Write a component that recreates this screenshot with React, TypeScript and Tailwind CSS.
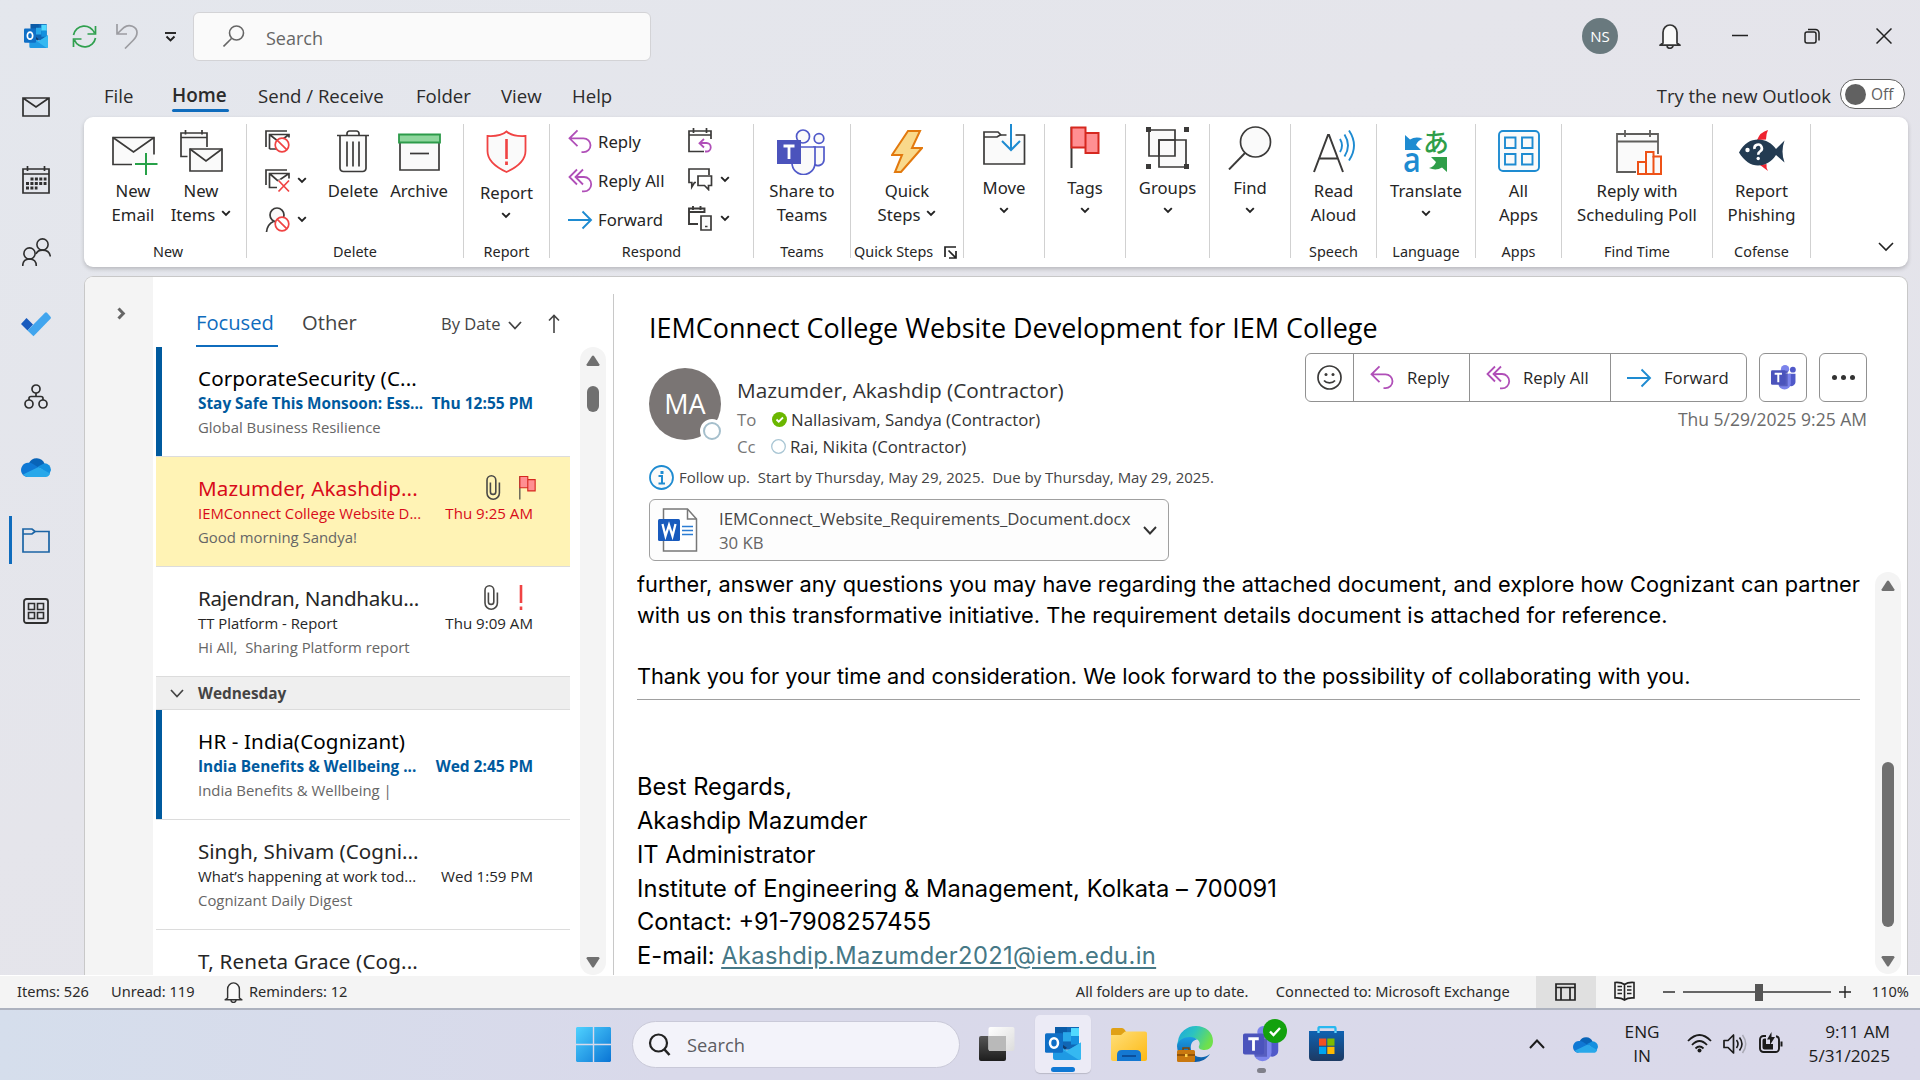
import React from 'react';

type Kids = { children?: React.ReactNode };

function Ico({ w, h, className = '', children }: { w: number; h: number; className?: string } & Kids) {
  return (
    <svg width={w} height={h} viewBox={`0 0 ${w} ${h}`} fill="none" className={'block shrink-0 ' + className}>
      {children}
    </svg>
  );
}

const INK = '#3b3a39';
const RED = '#f04343';
const BLUE = '#1e8bd1';
const PURPLE = '#b04fb8';
const FILL = '#fafafa';

/* ---------- shared icons ---------- */

function Caret({ className = '' }: { className?: string }) {
  return (
    <Ico w={10} h={7} className={className}>
      <path d="M1.2 1.2 5 5l3.8-3.8" stroke="#222" strokeWidth="1.9" />
    </Ico>
  );
}

function OutlookLogo({ w, h }: { w: number; h: number }) {
  return (
    <svg width={w} height={h} viewBox="0 3 36 32" preserveAspectRatio="none" className="block shrink-0">
      <path d="M10 3h24v22H10z" fill="#1066b5" />
      <path d="M10 3h12v6H10z" fill="#0a5ba8" />
      <path d="M18 8h8v9h-8z" fill="#28a8ea" />
      <path d="M26 4h8v8h-8z" fill="#50d9ff" />
      <path d="M26 12h8v8h-8z" fill="#1490df" />
      <path d="M10 15l12 8-12 10z" fill="#123b6d" />
      <path d="M36 18v15a2 2 0 0 1-2 2H10a2 2 0 0 1-2-2V17l14 9z" fill="#1f9ae4" />
      <path d="M36 18v15a2 2 0 0 1-2 2L16 24l6 2z" fill="#35b8f1" />
      <rect x="0" y="9" width="18" height="19" rx="1.600" fill="#0f6fc6" />
      <ellipse cx="9" cy="18.500" rx="4" ry="4.600" fill="none" stroke="#fff" strokeWidth="2.500" />
    </svg>
  );
}

function ReplyIcon() {
  return (
    <Ico w={25} h={25}>
      <path d="M9.500 1.500 1.500 9.500l8 8M2 9.500h13.500a7 7 0 0 1 0 14h-2" transform="scale(1 .98)" stroke={PURPLE} strokeWidth="1.800" />
    </Ico>
  );
}

function ReplyAllIcon() {
  return (
    <Ico w={25} h={25}>
      <path d="M9 1.500 1.500 9 9 16.500M15 1.500 7.500 9l7.500 7.500M8 9h8a7.200 7.200 0 0 1 0 14.400h-2" stroke={PURPLE} strokeWidth="1.800" />
    </Ico>
  );
}

function ForwardIcon() {
  return (
    <Ico w={25} h={20}>
      <path d="M0 10h23M14.500 1.500 23 10l-8.500 8.500" stroke={BLUE} strokeWidth="1.900" />
    </Ico>
  );
}

function FlagIcon({ w, h }: { w: number; h: number }) {
  return (
    <svg width={w} height={h} viewBox="0 0 30 42" fill="none" className="block shrink-0">
      <path d="M1.500 1v41" stroke={INK} strokeWidth="2" />
      <path d="M1.500 1.500h14v20h-14zM15.500 7h13v20h-13z" fill="#ff8f92" stroke="#d6281f" strokeWidth="2" />
    </svg>
  );
}

function OneDrive({ w, h }: { w: number; h: number }) {
  return (
    <svg width={w} height={h} viewBox="0 0 30 20" className="block shrink-0">
      <path d="M8 6a8.500 8.500 0 0 1 15.500.5L17 13 7 8z" fill="#0864b8" />
      <path d="M7 5.800A7 7 0 0 1 12 7l8 5-14 8a7 7 0 0 1-5-10.500A7 7 0 0 1 7 5.800z" fill="#0f78d4" />
      <path d="M17 9.500l6.500-3.300A6.800 6.800 0 0 1 30 13l-2 5z" fill="#1490df" />
      <path d="M17.500 10l11.500 6.500a5 5 0 0 1-5 3.500H7a7 7 0 0 1-5-2.500z" fill="#28a8ea" />
    </svg>
  );
}

function Paperclip() {
  return (
    <Ico w={15} h={25}>
      <path d="M4.400 7.500v9.200a2.700 2.700 0 0 0 5.400 0V5.200a4.400 4.400 0 0 0-8.800 0V18a6.200 6.200 0 0 0 12.400 0V7.500" stroke="#4a4947" strokeWidth="1.600" />
    </Ico>
  );
}

function Bell({ w, h }: { w: number; h: number }) {
  return (
    <svg width={w} height={h} viewBox="0 0 22 25" fill="none" className="block shrink-0">
      <path d="M4 19V8.500a7 7.500 0 0 1 14 0V19l3 2.200H1z" fill={FILL} stroke="#333" strokeWidth="1.700" strokeLinejoin="round" />
      <path d="M8 21.500a3 2.800 0 0 0 6 0" stroke="#333" strokeWidth="1.700" />
    </svg>
  );
}

function NoSign({ x, y }: { x: number; y: number }) {
  return (
    <g transform={`translate(${x} ${y})`}>
      <circle r="6.800" fill="#fff" stroke={RED} strokeWidth="1.700" />
      <path d="M-4.700-4.700 4.700 4.700" stroke={RED} strokeWidth="1.700" />
    </g>
  );
}

/* ---------- ribbon icons ---------- */

function NewEmailIcon() {
  return (
    <Ico w={46} h={46}>
      <path d="M1 7.500h41v27H1z" fill={FILL} />
      <path d="M20 34.500H1v-27h41v17" stroke={INK} strokeWidth="1.700" />
      <path d="M1 7.500 21.500 22 42 7.500" stroke={INK} strokeWidth="1.700" />
      <path d="M34 23v22M23 34h22.500" stroke="#27a148" strokeWidth="2" />
    </Ico>
  );
}

function NewItemsIcon() {
  return (
    <Ico w={43} h={42}>
      <path d="M1 3h26v15H10v9H1z" fill={FILL} />
      <path d="M7.500 26.500H1V3h26v14M1 7.500h26M5.500 0v4.500M22 0v4.500" stroke={INK} strokeWidth="1.700" />
      <path d="M10 19h32v22H10z" fill={FILL} stroke={INK} strokeWidth="1.700" />
      <path d="M10 19l16 12 16-12" stroke={INK} strokeWidth="1.700" />
    </Ico>
  );
}

function IgnoreIcon() {
  return (
    <Ico w={25} h={24}>
      <path d="M1 17V1h21M4.500 19V4.500H24v3M12 19H4.500M4.500 4.500 14 12l10-7.500" stroke={INK} strokeWidth="1.700" />
      <NoSign x={17} y={15} />
    </Ico>
  );
}

function CleanupIcon() {
  return (
    <Ico w={25} h={24}>
      <path d="M1 16V1h21M12 18.500H4.500V4.500H24v5M4.500 4.500 13 12l11-7.500" stroke={INK} strokeWidth="1.700" />
      <path d="M13.500 11.500l10.500 11M24 11.500l-10.500 11" stroke="#fff" strokeWidth="4" />
      <path d="M13.500 11.500l10.500 11M24 11.500l-10.500 11" stroke={RED} strokeWidth="1.700" />
    </Ico>
  );
}

function JunkIcon() {
  return (
    <Ico w={25} h={25}>
      <circle cx="12" cy="8" r="7" fill={FILL} stroke={INK} strokeWidth="1.700" />
      <path d="M8.500 14.500C4 16.500 2 20 1.500 25" stroke={INK} strokeWidth="1.700" />
      <NoSign x={17} y={17} />
    </Ico>
  );
}

function TrashIcon() {
  return (
    <Ico w={32} h={43}>
      <path d="M3 6v32.500a3.500 3.500 0 0 0 3.500 3h19a3.500 3.500 0 0 0 3.500-3V6" fill={FILL} stroke={INK} strokeWidth="1.700" />
      <path d="M0 5.500h32M10 5V3.500A2.500 2.500 0 0 1 12.500 1h7A2.500 2.500 0 0 1 22 3.500V5M10 11.500v25M16 11.500v25M22 11.500v25" stroke={INK} strokeWidth="1.700" />
    </Ico>
  );
}

function ArchiveIcon() {
  return (
    <Ico w={43} h={38}>
      <path d="M2 9h39v28H2z" fill={FILL} stroke={INK} strokeWidth="1.700" />
      <path d="M1 1.500h41V9.500H1z" fill="#8fd69d" stroke="#2d9b4a" strokeWidth="1.800" />
      <path d="M12 20.500h19" stroke={INK} strokeWidth="1.700" />
    </Ico>
  );
}

function ShieldIcon() {
  return (
    <Ico w={41} h={43}>
      <path d="M20.500 1.500c4 3.500 11 5 19 4.500v15c0 10-8 16-19 21-11-5-19-11-19-21V6c8 .5 15-1 19-4.500z" fill={FILL} stroke={RED} strokeWidth="1.800" />
      <path d="M20.500 9v20" stroke={RED} strokeWidth="2.600" />
      <path d="M20.500 31.500v3.500" stroke={RED} strokeWidth="2.800" />
    </Ico>
  );
}

function MeetingReplyIcon() {
  return (
    <Ico w={25} h={25}>
      <path d="M16 23.500H1V3h22v8M1 7h22M5.500 0v5M18.500 0v5" stroke={INK} strokeWidth="1.700" />
      <path d="M16 11l-4.500 4.200L16 19.500M11.500 15h7a4 4 0 0 1 0 8.500H17" stroke={PURPLE} strokeWidth="1.800" />
    </Ico>
  );
}

function ChatIcon() {
  return (
    <Ico w={25} h={23}>
      <path d="M8 14.500H6.500L3.800 19v-4.500H1V1h20v6" stroke={INK} strokeWidth="1.700" />
      <path d="M10 8h13.500v9.500h-3v4l-4-4H10z" fill="#fff" stroke={INK} strokeWidth="1.700" />
    </Ico>
  );
}

function MoreRespondIcon() {
  return (
    <Ico w={25} h={25}>
      <path d="M10 18H1V2.500h15.500V7M1 6h15.500M5 0v4M12.500 0v4" stroke={INK} strokeWidth="1.900" />
      <path d="M13 10h10v14H13zM17 20.500h2.500" fill={FILL} stroke={INK} strokeWidth="1.700" />
    </Ico>
  );
}

function TeamsOutline() {
  const c = '#5059c9';
  return (
    <Ico w={50} h={46}>
      <path d="M37 18h10v13a6 6 0 0 1-10 4z" fill={FILL} stroke={c} strokeWidth="1.700" />
      <path d="M15 18h23v16a11.500 11.500 0 0 1-23 0z" fill={FILL} stroke={c} strokeWidth="1.700" />
      <circle cx="26" cy="7.500" r="6.500" fill={FILL} stroke={c} strokeWidth="1.700" />
      <circle cx="42" cy="9.500" r="4.800" fill={FILL} stroke={c} strokeWidth="1.700" />
      <path d="M0 11h24v24H0z" fill="#4b53bc" />
      <path d="M6.500 17h11M12 17v13" stroke="#fff" strokeWidth="2.800" />
    </Ico>
  );
}

function BoltIcon() {
  return (
    <Ico w={32} h={43}>
      <path d="M17 1h12L21 18h10L10 42H4l7-17H1z" fill="#f9d98b" stroke="#e2790e" strokeWidth="2" />
    </Ico>
  );
}

function MoveIcon() {
  return (
    <Ico w={43} h={42}>
      <path d="M1 40V8h14l3 3h23.500v29z" fill={FILL} stroke={INK} strokeWidth="1.700" />
      <path d="M1 13h13l4-2.500" stroke={INK} strokeWidth="1.700" />
      <path d="M28 8v6" stroke="#fff" strokeWidth="9" />
      <path d="M28 0v25M19 17l9 9 9-9" stroke={BLUE} strokeWidth="2" />
    </Ico>
  );
}

function GroupsIcon() {
  return (
    <Ico w={43} h={42}>
      <path d="M3 3h26v26H3z" fill={FILL} stroke={INK} strokeWidth="1.700" />
      <path d="M13 13h27v27H13z" fill={FILL} stroke={INK} strokeWidth="1.700" />
      <path d="M13 13h16v16H13z" stroke={INK} strokeWidth="1.700" />
      <path d="M0 0h5v5H0zM38 0h5v5h-5zM0 37h5v5H0zM38 37h5v5h-5z" fill={INK} />
    </Ico>
  );
}

function FindIcon() {
  return (
    <Ico w={44} h={44}>
      <circle cx="27.500" cy="16" r="15" fill={FILL} stroke={INK} strokeWidth="1.700" />
      <path d="M17 27 1 43.500" stroke={INK} strokeWidth="1.900" />
    </Ico>
  );
}

function ReadAloudIcon() {
  return (
    <Ico w={42} h={43}>
      <path d="M1 42 15 5h1l14 37M6 28.500h19" stroke={INK} strokeWidth="2" />
      <path d="M27 9q4 6.500 0 13M31.500 4.500q7 11 0 22M36 .5q10 15 0 30" stroke={BLUE} strokeWidth="1.900" />
    </Ico>
  );
}

function TranslateIcon() {
  return (
    <div className="relative h-[43px] w-[42px]">
      <svg width="42" height="43" viewBox="0 0 42 43" className="absolute inset-0">
        <path d="M0 5l5 4.500Q11 6 18 9q-5 1-7 6l5 5H0z" fill={BLUE} />
        <path d="M42 42l-5-4.500Q31 41 24 38q5-1 7-6l-5-5h16z" fill="#2f9e49" />
      </svg>
      <span className="absolute -left-[2px] top-[12px] origin-left scale-x-90 font-['Open_Sans'] text-[34px] font-semibold leading-[34px] text-[#1e8bd1]">a</span>
      <span className="absolute left-[18px] -top-[2px] font-['Noto_Sans_CJK_JP'] text-[26px] font-medium leading-[26px] text-[#2f9e49]">あ</span>
    </div>
  );
}

function AllAppsIcon() {
  return (
    <Ico w={42} h={42}>
      <rect x="1" y="1" width="40" height="40" rx="4" fill={FILL} stroke={BLUE} strokeWidth="1.900" />
      <path d="M7 7.500h10.500v10.500H7zM24 7.500h10.500v10.500H24zM7 24h10.500v10.500H7zM24 24h10.500v10.500H24z" stroke={BLUE} strokeWidth="1.900" />
    </Ico>
  );
}

function PollIcon() {
  return (
    <Ico w={46} h={45}>
      <path d="M1 4h41v17H28v21H1z" fill={FILL} />
      <path d="M20 42H1V4h41v20M1 11.500h41M9 0v7M34 0v7" stroke="#5f5e5c" strokeWidth="1.800" />
      <path d="M22 32h8V22h7.500v4.500H45v17.500H22z" fill={FILL} stroke="#ee5217" strokeWidth="2" />
      <path d="M30 32v12M37.500 26v18" stroke="#ee5217" strokeWidth="2" />
    </Ico>
  );
}

function FishIcon() {
  return (
    <Ico w={46} h={42}>
      <path d="M18 10Q21 2 29 0q-2 4-2 9.500z" fill="#ef2330" />
      <path d="M21 35l8 6q-2-3-1.500-7z" fill="#ef2330" />
      <path d="M0 22.500C5 13 12 9.500 19 9.500c8 0 14 4 18 9.500l8.500-8.500q-4 11 0 22L37 25c-4 6-10 10.500-18 10.500C12 35.500 5 31 0 22.500z" fill="#233b52" />
      <circle cx="8.500" cy="20" r="2.200" fill="#fff" />
      <path d="M15.500 19a3.700 3.700 0 1 1 5.500 2.500c-1.500 1-1.800 1.600-1.800 3.200" stroke="#fff" strokeWidth="2.600" />
      <circle cx="19.200" cy="28.500" r="1.700" fill="#fff" />
    </Ico>
  );
}

/* ---------- title bar and tabs ---------- */

function TitleBar() {
  return (
    <header className="flex h-[72px] items-center">
      <div className="flex w-[193px] items-center">
        <div className="ml-6"><OutlookLogo w={24} h={24} /></div>
        <Ico w={25} h={25} className="ml-6">
          <path d="M1.500 11A11 11 0 0 1 22.500 9M23.500 2v8h-8M23.500 14A11 11 0 0 1 2.500 16M1.500 23v-8h8" stroke="#2fa04e" strokeWidth="1.700" />
        </Ico>
        <Ico w={23} h={25} className="ml-[19px]">
          <path d="M1 0v10h10M1.500 9.500 8 3.500c5-4 13-1 13 5 0 3-1 5-4 8l-8 8" stroke="#9c9ca1" strokeWidth="1.700" />
        </Ico>
        <Ico w={11} h={10} className="ml-[26px] mt-px">
          <path d="M0 1h11" stroke="#222" strokeWidth="1.900" />
          <path d="M1.500 4.500l4 4 4-4" stroke="#222" strokeWidth="1.900" />
        </Ico>
      </div>
      <div className="flex h-[49px] w-[458px] items-center rounded-md border border-[#d3d3d6] bg-[#fafafa] pl-[29px]">
        <Ico w={22} h={22}>
          <circle cx="13.500" cy="8" r="7" stroke="#666" strokeWidth="1.600" />
          <path d="M8.500 13.500.5 21.500" stroke="#666" strokeWidth="1.600" />
        </Ico>
        <span className="ml-[21px] mt-[5px] text-[18px] text-[#666]">Search</span>
      </div>
      <div className="ml-auto flex items-center">
        <div className="flex size-9 items-center justify-center rounded-full bg-[#69797e] text-[15px] text-white">NS</div>
        <div className="ml-[41px]"><Bell w={22} h={25} /></div>
        <Ico w={16} h={16} className="ml-[51px]"><path d="M0 7.500h16" stroke="#222" strokeWidth="1.500" /></Ico>
        <Ico w={16} h={16} className="ml-14">
          <rect x="1" y="4" width="11" height="11" rx="2" stroke="#222" strokeWidth="1.500" />
          <path d="M4 1.500h7.500a3.500 3.500 0 0 1 3.500 3.500v7.500" stroke="#222" strokeWidth="1.500" />
        </Ico>
        <Ico w={16} h={16} className="ml-14 mr-7"><path d="M.5.5l15 15M15.500.5l-15 15" stroke="#222" strokeWidth="1.500" /></Ico>
      </div>
    </header>
  );
}

function Tabs() {
  return (
    <nav className="flex h-[45px] pl-[104px] text-[18.600px] leading-[47px] text-[#2b2b2b]">
      <span className="w-[68px]">File</span>
      <span className="flex w-[86px] flex-col">
        <span className="h-[37px] text-[18.900px] font-semibold">Home</span>
        <span className="h-[3px] w-[57px] rounded-sm bg-[#0f6cbd]" />
      </span>
      <span className="w-[158px]">Send / Receive</span>
      <span className="w-[85px]">Folder</span>
      <span className="w-[71px]">View</span>
      <span>Help</span>
      <span className="ml-auto text-[18.450px]">Try the new Outlook</span>
      <span className="ml-[9px] mr-[15px] mt-[7px] flex h-[30px] w-[65px] items-center rounded-full border-[1.500px] border-[#616161] bg-white pl-1">
        <span className="size-[21px] rounded-full bg-[#616161]" />
        <span className="ml-[5px] mt-px text-[15.500px] leading-none text-[#616161]">Off</span>
      </span>
    </nav>
  );
}

/* ---------- ribbon ---------- */

function Big({ icon, lines, caret, w, top = 13, text = 66 }: { icon: React.ReactNode; lines: string[]; caret?: 'inline' | 'below'; w: string; top?: number; text?: number }) {
  return (
    <div className={'flex flex-col items-center ' + w}>
      <div className="flex items-start justify-center" style={{ height: text - 4, paddingTop: top }}>{icon}</div>
      <div className="whitespace-nowrap text-center text-[16.700px] leading-6">
        {lines.map((l, i) => (
          <div key={l} className="flex items-center justify-center">
            {l}
            {caret === 'inline' && i === lines.length - 1 && <Caret className="-mt-[3px] ml-[6px]" />}
          </div>
        ))}
        {caret === 'below' && <Caret className="mx-auto mt-[7px]" />}
      </div>
    </div>
  );
}

function Group({ w, label, sep = true, labelClass = '', children }: { w: string; label?: string; sep?: boolean; labelClass?: string } & Kids) {
  return (
    <section className={'flex shrink-0 ' + w}>
      <div className="flex min-w-0 flex-1 flex-col">
        <div className="flex h-[125px] justify-center">{children}</div>
        {label && <div className={'whitespace-nowrap text-center text-[14.400px] leading-[20px] ' + labelClass}>{label}</div>}
      </div>
      {sep && <div className="my-[7px] h-[134px] w-px bg-[#d1d1d1]" />}
    </section>
  );
}

function SmallRow({ icon, text, caret }: { icon: React.ReactNode; text?: string; caret?: boolean }) {
  return (
    <div className="flex h-[39px] items-center">
      <div className="flex w-[30px] shrink-0 justify-start">{icon}</div>
      {text && <span className="whitespace-nowrap text-[16.700px]">{text}</span>}
      {caret && <Caret className="ml-[2px]" />}
    </div>
  );
}

function Ribbon() {
  return (
    <div className="ml-[84px] flex h-[150px] w-[1824px] rounded-[9px] bg-white font-['Noto_Sans'] text-[#252525] shadow-[0_2px_4px_rgba(0,0,0,0.200)]">
      <Group w="w-[163px]" label="New" labelClass="pl-[6px]">
        <Big w="w-[68px] ml-1" icon={<div className="ml-[3px]"><NewEmailIcon /></div>} lines={['New', 'Email']} />
        <Big w="w-[68px]" icon={<NewItemsIcon />} lines={['New', 'Items']} caret="inline" />
      </Group>
      <Group w="w-[217px]" label="Delete">
        <div className="mr-auto pl-[18px] pt-[5px]">
          <SmallRow icon={<IgnoreIcon />} />
          <SmallRow icon={<CleanupIcon />} caret />
          <SmallRow icon={<JunkIcon />} caret />
        </div>
        <Big w="w-[66px]" icon={<TrashIcon />} lines={['Delete']} />
        <Big w="w-[66px] mr-[11px]" top={16} icon={<ArchiveIcon />} lines={['Archive']} />
      </Group>
      <Group w="w-[86px]" label="Report">
        <Big w="w-[80px]" icon={<ShieldIcon />} lines={['Report']} caret="below" text={68} />
      </Group>
      <Group w="w-[204px]" label="Respond">
        <div className="mr-auto pl-[18px] pt-[5px]">
          <SmallRow icon={<ReplyIcon />} text="Reply" />
          <SmallRow icon={<ReplyAllIcon />} text="Reply All" />
          <SmallRow icon={<ForwardIcon />} text="Forward" />
        </div>
        <div className="mr-[22px] w-[43px] pt-[4px]">
          <SmallRow icon={<MeetingReplyIcon />} />
          <SmallRow icon={<ChatIcon />} caret />
          <SmallRow icon={<MoreRespondIcon />} caret />
        </div>
      </Group>
      <Group w="w-[97px]" label="Teams">
        <Big w="w-[90px]" top={12} icon={<TeamsOutline />} lines={['Share to', 'Teams']} />
      </Group>
      <Group w="w-[113px]">
        <div className="flex flex-col">
          <div className="h-[125px] shrink-0">
            <Big w="w-[112px]" icon={<BoltIcon />} lines={['Quick', 'Steps']} caret="inline" />
          </div>
          <div className="flex items-center pl-[3px] text-[14.400px] leading-[20px]">
            <span className="whitespace-nowrap">Quick Steps</span>
            <Ico w={13} h={13} className="ml-[11px] mt-px">
              <path d="M1 11V1h11M4.500 4.500l7 7M12 5v7H5" stroke="#222" strokeWidth="1.700" />
            </Ico>
          </div>
        </div>
      </Group>
      <Group w="w-[81px]"><Big w="w-[79px]" top={7} text={63} icon={<MoveIcon />} lines={['Move']} caret="below" /></Group>
      <Group w="w-[81px]"><Big w="w-[79px]" top={9} text={63} icon={<FlagIcon w={30} h={42} />} lines={['Tags']} caret="below" /></Group>
      <Group w="w-[84px]"><Big w="w-[81px]" top={10} text={63} icon={<GroupsIcon />} lines={['Groups']} caret="below" /></Group>
      <Group w="w-[81px]"><Big w="w-[79px]" top={9} text={63} icon={<FindIcon />} lines={['Find']} caret="below" /></Group>
      <Group w="w-[86px]" label="Speech"><Big w="w-[80px]" icon={<ReadAloudIcon />} lines={['Read', 'Aloud']} /></Group>
      <Group w="w-[99px]" label="Language"><Big w="w-[96px]" icon={<TranslateIcon />} lines={['Translate']} caret="below" /></Group>
      <Group w="w-[86px]" label="Apps"><Big w="w-[80px]" icon={<AllAppsIcon />} lines={['All', 'Apps']} /></Group>
      <Group w="w-[151px]" label="Find Time"><Big w="w-[140px]" icon={<div className="ml-[3px]"><PollIcon /></div>} lines={['Reply with', 'Scheduling Poll']} /></Group>
      <Group w="w-[98px]" label="Cofense"><Big w="w-[90px]" icon={<FishIcon />} lines={['Report', 'Phishing']} /></Group>
      <Ico w={16} h={10} className="ml-auto mr-[14px] mt-[125px]"><path d="M1 1l7 7 7-7" stroke="#222" strokeWidth="1.600" /></Ico>
    </div>
  );
}

/* ---------- navigation rail ---------- */

function Rail() {
  const K = '#2f2f2f';
  return (
    <aside className="flex h-full w-[72px] flex-col items-center">
      <Ico w={28} h={20} className="mt-[25px]">
        <path d="M1 1h26v18H1zM1 1l13 9L27 1" stroke={K} strokeWidth="1.700" />
      </Ico>
      <Ico w={28} h={28} className="mt-[49px]">
        <path d="M1 3h26v24H1zM1 8h26M5.500 0v5M22.500 0v5" stroke={K} strokeWidth="1.700" />
        <path d="M8.500 13h16M4 17.500h20.500M4 22h11.500" stroke={K} strokeWidth="3" strokeDasharray="3 1.400" />
      </Ico>
      <Ico w={29} h={29} className="mt-[44px]">
        <circle cx="20.500" cy="6.500" r="5.600" stroke={K} strokeWidth="1.600" />
        <path d="M14 16c1-2.500 3-3.900 6.500-3.900 4.500 0 7.300 2.400 7.800 6.400" stroke={K} strokeWidth="1.600" />
        <circle cx="7.500" cy="15.500" r="5.600" stroke={K} strokeWidth="1.600" />
        <path d="M.7 28c0-4.500 2.800-7 6.800-7s6.800 2.500 6.800 7" stroke={K} strokeWidth="1.600" />
      </Ico>
      <Ico w={30} h={25} className="mt-[45px]">
        <path d="M0 12l5.500-6 6.500 6.500-5.500 6z" fill="#185abd" />
        <path d="M6.500 18.500 24 .7q1-.8 2 0l3.500 4q.8 1 0 2L12.500 24.300z" fill="#41a5ee" />
      </Ico>
      <Ico w={24} h={25} className="mt-[47px]">
        <circle cx="12" cy="5" r="4" stroke={K} strokeWidth="1.700" />
        <circle cx="5" cy="20" r="4" stroke={K} strokeWidth="1.700" />
        <circle cx="19" cy="20" r="4" stroke={K} strokeWidth="1.700" />
        <path d="M12 9v3.500M5 16v-1.500q0-2 2-2h10q2 0 2 2V16" stroke={K} strokeWidth="1.700" />
      </Ico>
      <div className="mt-[48px]"><OneDrive w={30} h={20} /></div>
      <div className="mt-[39px] flex h-12 w-full items-center">
        <span className="ml-[9px] h-12 w-[3px] bg-[#0f6cbd]" />
        <Ico w={28} h={25} className="ml-[10px]">
          <path d="M1 24V1h9l3 2.500h14V24z" stroke="#1b64a5" strokeWidth="1.700" />
          <path d="M1 6h9l3-2.500" stroke="#1b64a5" strokeWidth="1.700" />
        </Ico>
      </div>
      <Ico w={26} h={26} className="mt-[34px] -ml-px">
        <rect x="1" y="1" width="24" height="24" rx="2.500" stroke={K} strokeWidth="1.800" />
        <path d="M5.500 5.500h6v6h-6zM14.500 5.500h6v6h-6zM5.500 14.500h6v6h-6zM14.500 14.500h6v6h-6z" stroke={K} strokeWidth="1.600" />
      </Ico>
    </aside>
  );
}

/* ---------- message list ---------- */

type Mail = { name: string; subject: string; time: string; preview: string; kind?: 'unread' | 'flagged' | 'important'; nameClass?: string };

function MailRow({ name, subject, time, preview, kind, nameClass = '' }: Mail) {
  const unread = kind === 'unread';
  const flagged = kind === 'flagged';
  return (
    <div className={'flex h-[110px] shrink-0 border-b border-[#dcdcdc] ' + (flagged ? 'bg-[#fff3b5]' : 'bg-white')}>
      <div className={'w-[6px] ' + (unread ? 'bg-[#005a9e]' : '')} />
      <div className="ml-9 w-[335px] whitespace-pre pt-[17px]">
        <div className="flex h-[27px] items-center">
          <span className={"flex-1 font-['Noto_Sans'] text-[20.600px] leading-[28px] " + nameClass + (flagged ? ' text-[#d80b1a]' : unread ? ' text-black' : ' text-[#262626]')}>{name}</span>
          {flagged && <><Paperclip /><span className="-mr-[3px] ml-[18px]"><FlagIcon w={17} h={25} /></span></>}
          {kind === 'important' && (
            <>
              <Paperclip />
              <Ico w={4} h={25} className="ml-[20px] mr-[10px]"><path d="M2 0v18M2 21.500v3.500" stroke={RED} strokeWidth="2.600" /></Ico>
            </>
          )}
        </div>
        <div className={'flex justify-between leading-6 ' + (unread ? 'text-[15.350px] font-bold text-[#005a9e]' : flagged ? 'text-[14.850px] text-[#d80b1a]' : 'text-[14.850px] text-[#262626]')}>
          <span>{subject}</span>
          <span className={unread ? 'text-[15.500px]' : 'text-[15.100px]'}>{time}</span>
        </div>
        <div className="text-[14.900px] leading-6 text-[#666]">{preview}</div>
      </div>
    </div>
  );
}

function ScrollTrack({ thumb, className }: { thumb: string; className: string }) {
  return (
    <div className={'flex w-[26px] flex-col items-center rounded-full bg-[#f4f4f4] ' + className}>
      <Ico w={14} h={11} className="mt-2"><path d="M6 1q1-1 2 0l5.500 8.500q.3 1-1 1.500h-11Q.2 10.500.500 9.500z" fill="#707070" /></Ico>
      <div className={'w-3 rounded-full bg-[#707070] ' + thumb} />
      <Ico w={14} h={11} className="mb-[7px] mt-auto"><path d="M6 10q1 1 2 0l5.500-8.500q.3-1-1-1.500h-11Q.2.500.500 1.500z" fill="#707070" /></Ico>
    </div>
  );
}

function MessageList() {
  return (
    <div className="flex h-full w-[460px] flex-col">
      <div className="flex h-[70px] pl-[43px] pt-[32px] leading-[27px]">
        <div className="flex h-[38px] w-[82px] flex-col justify-between border-b-2 border-[#0f6cbd]">
          <span className="text-[20.200px] text-[#0f6cbd]">Focused</span>
        </div>
        <span className="ml-6 w-[139px] text-[20.200px] text-[#444]">Other</span>
        <span className="pt-px text-[16.500px] text-[#444]">By Date</span>
        <Ico w={14} h={9} className="ml-[7px] mt-[12px]"><path d="M1 1l6 6.500L13 1" stroke="#444" strokeWidth="1.800" /></Ico>
        <Ico w={12} h={19} className="ml-[26px] mt-[5px]"><path d="M6 19V1.500M1 6.500l5-5 5 5" stroke="#444" strokeWidth="1.600" /></Ico>
      </div>
      <div className="flex min-h-0 flex-1">
        <div className="ml-[3px] flex w-[414px] flex-col overflow-hidden">
          <MailRow kind="unread" nameClass="tracking-[0.120px]" name="CorporateSecurity (C..." subject="Stay Safe This Monsoon: Ess..." time="Thu 12:55 PM" preview="Global Business Resilience" />
          <MailRow kind="flagged" nameClass="tracking-[0.100px]" name="Mazumder, Akashdip..." subject="IEMConnect College Website D..." time="Thu 9:25 AM" preview="Good morning Sandya!" />
          <MailRow kind="important" nameClass="tracking-[-0.280px]" name="Rajendran, Nandhaku..." subject="TT Platform - Report" time="Thu 9:09 AM" preview="Hi All,  Sharing Platform report" />
          <div className="flex h-[33px] shrink-0 items-center border-b border-[#dcdcdc] bg-[#efefef]">
            <Ico w={14} h={9} className="ml-[14px]"><path d="M1 1l6 6.500L13 1" stroke="#444" strokeWidth="1.700" /></Ico>
            <span className="ml-[14px] mt-px text-[15.400px] font-bold text-[#444]">Wednesday</span>
          </div>
          <MailRow kind="unread" nameClass="tracking-[0.120px]" name="HR - India(Cognizant)" subject="India Benefits & Wellbeing ..." time="Wed 2:45 PM" preview="India Benefits & Wellbeing |" />
          <MailRow name="Singh, Shivam (Cogni..." subject="What’s happening at work tod..." time="Wed 1:59 PM" preview="Cognizant Daily Digest" />
          <MailRow nameClass="tracking-[0.150px]" name="T, Reneta Grace (Cog..." subject="" time="" preview="" />
        </div>
        <ScrollTrack className="ml-[10px] h-[628px]" thumb="mt-5 h-[26px]" />
      </div>
    </div>
  );
}

/* ---------- reading pane ---------- */

function TeamsColor({ size }: { size: number }) {
  return (
    <svg width={size} height={size} viewBox="0 0 24 24" className="block shrink-0">
      <circle cx="21" cy="4.500" r="2.800" fill="#5059c9" />
      <circle cx="13.500" cy="4" r="4" fill="#7b83eb" />
      <path d="M17 8.500h6.500v8a4 4 0 0 1-6.500 3z" fill="#5059c9" />
      <path d="M7 8.500h12v9a6 6 0 0 1-12 0z" fill="#7b83eb" />
      <path d="M8 5.500h8v15H8z" fill="#3a3f9a" opacity=".55" />
      <rect x="0" y="5" width="14" height="14" rx="1.200" fill="#4b53bc" />
      <path d="M3.500 8.500h7M7 8.500v8" stroke="#fff" strokeWidth="1.900" />
    </svg>
  );
}

function ActionBar() {
  const cell = 'flex h-full items-center border-r border-[#919191]';
  return (
    <div className="flex h-[49px] shrink-0 text-[16.700px] text-[#262626]">
      <div className="flex h-full w-[442px] rounded-md border-[1.500px] border-[#919191]">
        <div className={cell + ' w-12 justify-center'}>
          <Ico w={25} h={25}>
            <circle cx="12.500" cy="12.500" r="11.500" stroke={INK} strokeWidth="1.700" />
            <circle cx="9" cy="9.500" r="1.500" fill={INK} /><circle cx="16" cy="9.500" r="1.500" fill={INK} />
            <path d="M7 15.500a6.500 5 0 0 0 11 0" stroke={INK} strokeWidth="1.700" />
          </Ico>
        </div>
        <div className={cell + ' w-[116px] pl-4'}><ReplyIcon /><span className="ml-3">Reply</span></div>
        <div className={cell + ' w-[141px] pl-4'}><ReplyAllIcon /><span className="ml-3">Reply All</span></div>
        <div className="flex h-full items-center pl-4"><ForwardIcon /><span className="ml-3">Forward</span></div>
      </div>
      <div className="ml-3 flex h-full w-12 items-center justify-center rounded-md border-[1.500px] border-[#919191]"><TeamsColor size={25} /></div>
      <div className="ml-3 flex h-full w-12 items-center justify-center gap-[4px] rounded-md border-[1.500px] border-[#919191]">
        <span className="size-[5px] rounded-full bg-[#333]" />
        <span className="size-[5px] rounded-full bg-[#333]" />
        <span className="size-[5px] rounded-full bg-[#333]" />
      </div>
    </div>
  );
}

function ReadingPane() {
  return (
    <div className="-ml-px flex h-full w-[1293px] flex-col whitespace-pre">
      <h1 className="h-[76px] pl-9 pt-[33px] text-[26.950px] leading-9 text-black">IEMConnect College Website Development for IEM College</h1>
      <div className="flex h-[110px] pl-9">
        <div className="relative mt-[15px] flex size-[72px] items-center justify-center rounded-full bg-[#7a7574] text-[27px] text-white">
          MA
          <span className="absolute -right-[3px] -bottom-[3px] size-[24px] rounded-full border-2 border-white bg-white p-px">
            <span className="block size-full rounded-full border-2 border-[#a5bfcc]" />
          </span>
        </div>
        <div className="ml-4 pt-[23px] text-[16.800px] text-[#333]">
          <div className="h-[30px] text-[20.800px] leading-7">Mazumder, Akashdip (Contractor)</div>
          <div className="flex h-[27px] items-center">
            <span className="w-[35px] text-[#767676]">To</span>
            <Ico w={15} h={15} className="mr-1">
              <circle cx="7.500" cy="7.500" r="7.500" fill="#6bb700" />
              <path d="M4.500 7.500l2.200 2.200L11 5.500" stroke="#fff" strokeWidth="1.800" />
            </Ico>
            Nallasivam, Sandya (Contractor)
          </div>
          <div className="flex h-[27px] items-center">
            <span className="w-[34px] text-[#767676]">Cc</span>
            <Ico w={15} h={15} className="mr-1"><circle cx="7.500" cy="7.500" r="6.800" stroke="#a9c6d4" strokeWidth="1.300" /></Ico>
            Rai, Nikita (Contractor)
          </div>
        </div>
        <div className="ml-auto mr-[39px]">
          <ActionBar />
          <div className="pt-[5px] text-right text-[17.500px] leading-6 text-[#6b6b6b]">Thu 5/29/2025 9:25 AM</div>
        </div>
      </div>
      <div className="flex h-[27px] items-center pl-9 pt-px text-[14.970px] text-[#444]">
        <Ico w={25} h={25}>
          <circle cx="12.500" cy="12.500" r="11.500" fill={FILL} stroke={BLUE} strokeWidth="1.800" />
          <path d="M9.500 11H13v7.500M9.500 18.500h6.500" stroke={BLUE} strokeWidth="2" /><path d="M11.500 6h3v3h-3z" fill={BLUE} />
        </Ico>
        <span className="ml-[5px]">{'Follow up.  Start by Thursday, May 29, 2025.  Due by Thursday, May 29, 2025.'}</span>
      </div>
      <div className="ml-9 mt-[9px] flex h-[62px] w-[520px] shrink-0 items-center rounded-md border border-[#a0a0a0] bg-[#fdfdfd] pl-2 text-[16.750px]">
        <Ico w={40} h={44}>
          <path d="M5.500 1h24l9 10v32h-33z" fill="#fff" stroke="#777" strokeWidth="1.500" />
          <path d="M29.500 1v10h9" stroke="#777" strokeWidth="1.500" />
          <path d="M24 18.500h11M24 22.500h11M24 26.500h11" stroke="#2b7cd3" strokeWidth="1.400" />
          <rect x="0" y="11" width="22" height="22" rx="1.500" fill="#185abd" />
          <path d="M4.500 16l3 12L11 17l3.500 11 3-12" stroke="#fff" strokeWidth="2.300" />
        </Ico>
        <div className="ml-[21px] flex-1 pt-px leading-6">
          <div className="text-[#444]">IEMConnect_Website_Requirements_Document.docx</div>
          <div className="text-[#666]">30 KB</div>
        </div>
        <Ico w={14} h={9} className="mr-[11px] mt-[1px]"><path d="M1 1l6 6.500L13 1" stroke="#333" strokeWidth="1.900" /></Ico>
      </div>
      <div className="mt-[11px] flex min-h-0 flex-1">
        <div className="ml-6 w-[1223px] overflow-hidden font-['Inter'] text-black">
          <div className="border-b border-[#a0a0a0] pb-[7px] text-[21.750px] leading-[30.800px] -mt-[3px]">
            <p className="tracking-[0.020px]">further, answer any questions you may have regarding the attached document, and explore how Cognizant can partner</p>
            <p className="tracking-[0.060px]">with us on this transformative initiative. The requirement details document is attached for reference.</p>
            <p>&nbsp;</p>
            <p className="tracking-[-0.030px]">Thank you for your time and consideration. We look forward to the possibility of collaborating with you.</p>
          </div>
          <div className="pt-[70px] text-[23.700px] leading-[33.800px]">
            <p>Best Regards,</p>
            <p>Akashdip Mazumder</p>
            <p>IT Administrator</p>
            <p className="tracking-[0.040px]">Institute of Engineering &amp; Management, Kolkata – 700091</p>
            <p>Contact: +91-7908257455</p>
            <p>E-mail: <span className="tracking-[0.380px] text-[#467886] underline decoration-[1.500px] underline-offset-[3px]">Akashdip.Mazumder2021@iem.edu.in</span></p>
          </div>
        </div>
        <ScrollTrack className="ml-[15px] h-[402px]" thumb="mt-[171px] h-[165px]" />
      </div>
    </div>
  );
}

/* ---------- status bar and taskbar ---------- */

function StatusBar() {
  return (
    <footer className="flex h-[34px] items-center border-b-2 border-[#adb2bf] bg-[#f4f4f4] font-['Noto_Sans'] text-[14.600px] text-[#2b2b2b]">
      <span className="ml-[17px] w-[94px]">Items: 526</span>
      <span className="w-[113px]">Unread: 119</span>
      <Bell w={19} h={21} />
      <span className="ml-[6px]">Reminders: 12</span>
      <span className="ml-auto w-[200px]">All folders are up to date.</span>
      <span className="w-[260px]">Connected to: Microsoft Exchange</span>
      <span className="flex h-full w-[60px] items-center justify-center bg-[#e0e0e0]">
        <Ico w={21} h={18}><path d="M1 1h19v16H1zM1 4.500h19M6 4.500V17M15 4.500V17" stroke="#222" strokeWidth="1.700" /></Ico>
      </span>
      <Ico w={21} h={20} className="ml-[18px] -mt-[2px]">
        <path d="M10.500 3.500Q7 1 1 1.500V17q6-.5 9.500 2 3.500-2.500 9.500-2V1.500q-6-.5-9.500 2zV19" stroke="#222" strokeWidth="1.600" />
        <path d="M3.500 5.500h4.500M3.500 9h4.500M3.500 12.500h4.500M13 5.500h4.500M13 9h4.500M13 12.500h4.500" stroke="#222" strokeWidth="1.600" />
      </Ico>
      <Ico w={12} h={12} className="ml-[28px]"><path d="M0 6h12" stroke="#222" strokeWidth="1.400" /></Ico>
      <span className="ml-[8px] flex h-[18px] w-[148px] items-center">
        <span className="h-[2px] w-[72px] bg-[#666]" />
        <span className="h-[17px] w-[8px] bg-[#555]" />
        <span className="h-[2px] flex-1 bg-[#666]" />
      </span>
      <Ico w={12} h={12} className="ml-[8px]"><path d="M0 6h12M6 0v12" stroke="#222" strokeWidth="1.400" /></Ico>
      <span className="ml-[21px] mr-[11px]">110%</span>
    </footer>
  );
}

function StartLogo() {
  return (
    <Ico w={35} h={35}>
      <defs><linearGradient id="win" x1="0" y1="0" x2="1" y2="1"><stop stopColor="#4fd2ff" /><stop offset="1" stopColor="#0a74d4" /></linearGradient></defs>
      <path d="M1 0h15.800v16.800H0V1zM18.200 0H34l1 1v15.800H18.200zM0 18.200h16.800V35H1l-1-1zM18.200 18.200H35V34l-1 1H18.200z" fill="url(#win)" />
    </Ico>
  );
}

function TaskViewIcon() {
  return (
    <Ico w={36} h={35}>
      <defs>
        <linearGradient id="tv" x1="0" y1="0" x2="0" y2="1"><stop stopColor="#555" /><stop offset="1" stopColor="#1d1d1d" /></linearGradient>
        <linearGradient id="tw" x1="0" y1="0" x2="1" y2="1"><stop stopColor="#fff" /><stop offset="1" stopColor="#dcdcdc" /></linearGradient>
      </defs>
      <rect x="0" y="9" width="27" height="25" rx="2" fill="url(#tv)" />
      <rect x="9.500" y="0" width="26" height="24" rx="2" fill="url(#tw)" />
      <path d="M9.500 9H27v15H11.500a2 2 0 0 1-2-2z" fill="#b9b9b9" />
    </Ico>
  );
}

function FolderLogo() {
  return (
    <Ico w={36} h={33}>
      <defs><linearGradient id="fd" x1="0" y1="0" x2="1" y2="1"><stop stopColor="#ffdf7a" /><stop offset="1" stopColor="#fdb913" /></linearGradient></defs>
      <path d="M0 2q0-2 2-2h9q1.500 0 2.500 1.500L16 5v8H0z" fill="#e0a116" />
      <path d="M0 7h10l4-3.500h20q2 0 2 2V31q0 2-2 2H2q-2 0-2-2z" fill="url(#fd)" />
      <path d="M6 33v-6q0-5 5-5h14q5 0 5 5v6z" fill="#1478d2" />
      <path d="M11 28h14" stroke="#0b4f9c" strokeWidth="2" />
    </Ico>
  );
}

function EdgeLogo() {
  return (
    <Ico w={36} h={36}>
      <defs>
        <linearGradient id="e1" x1="0" y1="0" x2="1" y2=".4"><stop stopColor="#1aa5e0" /><stop offset=".5" stopColor="#2cc3c0" /><stop offset="1" stopColor="#6fe04c" /></linearGradient>
        <linearGradient id="e2" x1="0" y1="0" x2="0" y2="1"><stop stopColor="#1b9de2" /><stop offset="1" stopColor="#0c59a4" /></linearGradient>
      </defs>
      <path d="M1 15A18 17 0 0 1 19 0c10 0 17 6.500 17 15 0 6-4 9-8.500 9-4 0-6.500-2-5.500-4 2-4-1-8-7-8C8 12 2 16 0 21q0-3 1-6z" fill="url(#e1)" />
      <path d="M0 20C1 14 7 11 13 11q5 0 7 2.500c-5 1-7 5-6 10C15.500 31 25 34 33 28c-3 5-9 8-15 8C8 36 0 29 0 20z" fill="url(#e2)" />
      <rect x="0" y="24" width="18" height="12" rx="1.500" fill="#c9780f" />
      <path d="M0 29h18" stroke="#7d4504" strokeWidth="1.400" /><path d="M6 24v-2h6v2" stroke="#7d4504" strokeWidth="1.500" /><path d="M8 28h2.500v3H8z" fill="#ffd34d" />
    </Ico>
  );
}

function StoreLogo() {
  return (
    <Ico w={36} h={36}>
      <defs><linearGradient id="st" x1="0" y1="0" x2="0" y2="1"><stop stopColor="#0f62b1" /><stop offset="1" stopColor="#1d3a63" /></linearGradient></defs>
      <path d="M9.500 8V2.500q0-1.500 1.500-1.500h14q1.500 0 1.500 1.500V8" stroke="#28b8f0" strokeWidth="2.300" />
      <path d="M0 5h35v26q0 4-4 4H4q-4 0-4-4z" fill="url(#st)" />
      <path d="M9.500 5v2M26.500 5v2" stroke="#5fd8ff" strokeWidth="2.300" />
      <path d="M10 12.500h7.200v7.200H10z" fill="#f25022" /><path d="M18.300 12.500h7.200v7.200h-7.200z" fill="#7fba00" />
      <path d="M10 20.800h7.200V28H10z" fill="#00a4ef" /><path d="M18.300 20.800h7.200V28h-7.200z" fill="#ffb900" />
    </Ico>
  );
}

function Taskbar() {
  return (
    <div className="flex h-[70px] items-center bg-linear-to-r from-[#d5deec] via-[#d9d9ea] via-35% to-[#dad9ea] pb-[2px]">
      <div className="ml-[576px] mt-px"><StartLogo /></div>
      <div className="ml-[21px] mt-px flex h-[47px] w-[328px] items-center rounded-full border border-[#c9c9d8] bg-[#f3f3fa] pl-[15px]">
        <Ico w={23} h={23}>
          <circle cx="10.500" cy="10" r="8.500" stroke="#222" strokeWidth="2.200" />
          <path d="M16.500 16.500l5 5.500" stroke="#222" strokeWidth="2.600" />
        </Ico>
        <span className="ml-4 text-[18.300px] text-[#5c5c62]">Search</span>
      </div>
      <div className="ml-[19px]"><TaskViewIcon /></div>
      <div className="ml-5 flex h-[58px] w-[56px] flex-col items-center rounded-[5px] bg-[#ecebf6] pt-[12px] shadow-[0_1px_1px_rgba(0,0,0,0.150)]">
        <OutlookLogo w={36} h={33} />
        <span className="mt-[7px] h-[5px] w-6 rounded-full bg-[#0f78d4]" />
      </div>
      <div className="ml-5"><FolderLogo /></div>
      <div className="ml-[30px]"><EdgeLogo /></div>
      <div className="relative ml-[30px]">
        <TeamsColor size={36} />
        <svg width="24" height="24" viewBox="0 0 24 24" fill="none" className="absolute -top-[7px] left-[20px]">
          <circle cx="12" cy="12" r="12" fill="#13a10e" />
          <path d="M7 12.500l3.500 3.500 6.500-7" stroke="#fff" strokeWidth="2.400" />
        </svg>
        <span className="absolute -bottom-[11px] left-[14px] h-[5px] w-[9px] rounded-full bg-[#80808a]" />
      </div>
      <div className="ml-[30px]"><StoreLogo /></div>

      <div className="ml-auto flex items-center text-[17.200px] leading-6 text-[#1b1b1b]">
        <Ico w={16} h={10}><path d="M1 9l7-7.500L15 9" stroke="#1b1b1b" strokeWidth="2" /></Ico>
        <div className="ml-7"><OneDrive w={25} h={17} /></div>
        <div className="ml-[22px] w-[45px] text-center"><div>ENG</div><div>IN</div></div>
        <Ico w={25} h={20} className="ml-[22px] -mt-[2px]">
          <path d="M1 8q11.500-12 23 0M5 12q7.500-8 15 0M8.500 15.500q4-4 8 0" stroke="#1b1b1b" strokeWidth="1.800" />
          <circle cx="12.500" cy="17.500" r="2" fill="#1b1b1b" />
        </Ico>
        <Ico w={24} h={20} className="ml-[11px]">
          <path d="M1 6.500h4L10.500 1v18L5 13.500H1z" stroke="#1b1b1b" strokeWidth="1.700" strokeLinejoin="round" />
          <path d="M13.500 6q3 4 0 8M16.500 3.500q5 6.500 0 13" stroke="#1b1b1b" strokeWidth="1.600" />
          <path d="M19.500 1q6.500 9 0 18" stroke="#aaaab5" strokeWidth="1.500" />
        </Ico>
        <Ico w={24} h={22} className="ml-[12px] -mt-[2px]">
          <path d="M7 4H4.500A3.500 3.500 0 0 0 1 7.500v9A3.500 3.500 0 0 0 4.500 20h12a3.500 3.500 0 0 0 3.500-3.500v-9A3.500 3.500 0 0 0 17 4.200" stroke="#1b1b1b" strokeWidth="1.900" />
          <path d="M3.500 8.500q0-2 2-2h1.500V12h7v5.500H5.500q-2 0-2-2z" fill="#1b1b1b" />
          <path d="M12.500 0 8 7.500h3V13l5-8h-3.500z" fill="#1b1b1b" /><path d="M22.500 9.500v5" stroke="#1b1b1b" strokeWidth="2" />
        </Ico>
        <div className="ml-[26px] mr-[30px] text-right leading-[24px]"><div>9:11 AM</div><div>5/31/2025</div></div>
      </div>
    </div>
  );
}

export default function App() {
  return (
    <div className="flex h-[1080px] w-[1920px] flex-col overflow-hidden bg-linear-to-br from-[#e4e7ed] via-[#e5e5eb] via-40% to-[#e3e2ea] font-['Open_Sans',sans-serif]">
      <TitleBar />
      <div className="flex h-[903px] shrink-0">
        <Rail />
        <div className="-ml-[72px] flex w-[1920px] flex-col">
          <Tabs />
          <Ribbon />
          <main className="ml-[84px] mt-[9px] flex h-[699px] w-[1824px] overflow-hidden rounded-t-[9px] border border-b-0 border-[#c8c8c8] bg-white">
            <div className="w-[68px] shrink-0 bg-[#f4f4f4]">
              <Ico w={9} h={13} className="ml-[32px] mt-[30px]"><path d="M1.500 1.500l4.800 5-4.800 5" stroke="#666" strokeWidth="3" /></Ico>
            </div>
            <MessageList />
            <div className="mt-[17px] w-px shrink-0 bg-[#c8c8c8]" />
            <ReadingPane />
          </main>
        </div>
      </div>
      <div className="h-px shrink-0 bg-white" />
      <StatusBar />
      <Taskbar />
    </div>
  );
}
